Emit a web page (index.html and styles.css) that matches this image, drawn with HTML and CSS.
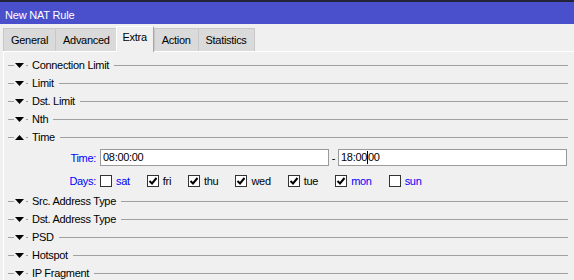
FILE: index.html
```html
<!DOCTYPE html>
<html>
<head>
<title>New NAT Rule</title>
<link rel="stylesheet" href="styles.css">
</head>
<body>

<div class="titlebar">New NAT Rule</div>

<div class="tabs">
	<span class="tab">General</span>
	<span class="tab">Advanced</span>
	<span class="tab selected">Extra</span>
	<span class="tab">Action</span>
	<span class="tab">Statistics</span>
</div>

<div class="panel">

	<div class="section"><i class="seg"></i><svg class="arrow" width="9" height="5"><polygon points="0,0 9,0 4.5,5"/></svg><i class="seg short"></i><span class="name">Connection Limit</span><i class="rule"></i></div>
	<div class="section"><i class="seg"></i><svg class="arrow" width="9" height="5"><polygon points="0,0 9,0 4.5,5"/></svg><i class="seg short"></i><span class="name">Limit</span><i class="rule"></i></div>
	<div class="section"><i class="seg"></i><svg class="arrow" width="9" height="5"><polygon points="0,0 9,0 4.5,5"/></svg><i class="seg short"></i><span class="name">Dst. Limit</span><i class="rule"></i></div>
	<div class="section"><i class="seg"></i><svg class="arrow" width="9" height="5"><polygon points="0,0 9,0 4.5,5"/></svg><i class="seg short"></i><span class="name">Nth</span><i class="rule"></i></div>
	<div class="section"><i class="seg"></i><svg class="arrow" width="9" height="5"><polygon points="0,5 9,5 4.5,0"/></svg><i class="seg short"></i><span class="name">Time</span><i class="rule"></i></div>

	<div class="time-body">
		<div class="field">
			<label>Time:</label>
			<span class="box">08:00:00</span>
			<span class="dash">-</span>
			<span class="box">18:00<i class="caret"></i>00</span>
		</div>
		<div class="field">
			<label>Days:</label>
			<div class="days">
				<span class="day blue"><i class="check"></i>sat</span>
				<span class="day"><i class="check on"><svg width="10" height="10"><path d="M1.5 5 L4 7.5 L8.5 2"/></svg></i>fri</span>
				<span class="day"><i class="check on"><svg width="10" height="10"><path d="M1.5 5 L4 7.5 L8.5 2"/></svg></i>thu</span>
				<span class="day"><i class="check on"><svg width="10" height="10"><path d="M1.5 5 L4 7.5 L8.5 2"/></svg></i>wed</span>
				<span class="day"><i class="check on"><svg width="10" height="10"><path d="M1.5 5 L4 7.5 L8.5 2"/></svg></i>tue</span>
				<span class="day blue"><i class="check on"><svg width="10" height="10"><path d="M1.5 5 L4 7.5 L8.5 2"/></svg></i>mon</span>
				<span class="day blue"><i class="check"></i>sun</span>
			</div>
		</div>
	</div>

	<div class="section"><i class="seg"></i><svg class="arrow" width="9" height="5"><polygon points="0,0 9,0 4.5,5"/></svg><i class="seg short"></i><span class="name">Src. Address Type</span><i class="rule"></i></div>
	<div class="section"><i class="seg"></i><svg class="arrow" width="9" height="5"><polygon points="0,0 9,0 4.5,5"/></svg><i class="seg short"></i><span class="name">Dst. Address Type</span><i class="rule"></i></div>
	<div class="section"><i class="seg"></i><svg class="arrow" width="9" height="5"><polygon points="0,0 9,0 4.5,5"/></svg><i class="seg short"></i><span class="name">PSD</span><i class="rule"></i></div>
	<div class="section"><i class="seg"></i><svg class="arrow" width="9" height="5"><polygon points="0,0 9,0 4.5,5"/></svg><i class="seg short"></i><span class="name">Hotspot</span><i class="rule"></i></div>
	<div class="section"><i class="seg"></i><svg class="arrow" width="9" height="5"><polygon points="0,0 9,0 4.5,5"/></svg><i class="seg short"></i><span class="name">IP Fragment</span><i class="rule"></i></div>

</div>

</body>
</html>
```

FILE: styles.css
```css
body {
	margin: 0;
	background-color: #f0f0f0;
	font-family: 'Liberation Sans', Arial, sans-serif;
	font-size: 11px;
	letter-spacing: -0.3px;
	color: #000;
	overflow: hidden;
}

.titlebar {
	height: 24px;
	border-top: 2px solid #23233a;
	background-color: #4a4fcc;
	color: white;
	padding: 2px 0 0 5px;
	box-sizing: border-box;
	line-height: 22px;
	letter-spacing: -0.2px;
}

.tabs {
	display: flex;
	align-items: flex-end;
	height: 27px;
	padding-left: 3px;
	box-sizing: border-box;
}

.tab {
	height: 23px;
	padding: 0 7px;
	box-sizing: border-box;
	line-height: 23px;
	background-color: #dadada;
	border: 1px solid #c8c8c8;
	border-bottom: none;
	margin-right: -1px;
}

.tab.selected {
	position: relative;
	z-index: 1;
	height: 26px;
	margin-bottom: -1px;
	padding: 0 6px;
	line-height: 20px;
	background-color: #f0f0f0;
	border-color: #fff #a8a8a8 transparent #fff;
	margin-left: -1px;
	margin-right: 0;
}

.panel {
	border-top: 1px solid #fff;
	border-left: 1px solid #fff;
	margin-left: 3px;
	padding: 4px 6px 0 4px;
}

.section {
	display: flex;
	align-items: center;
	height: 18px;
}

.seg, .rule {
	display: block;
	height: 1px;
	background-color: #a0a0a0;
}

.seg {
	width: 6px;
}

.seg.short {
	width: 2px;
}

.arrow {
	display: block;
	margin: 0 2px 0 1px;
}

.arrow polygon {
	fill: #000;
}

.name {
	margin: 0 5px 0 4px;
	white-space: nowrap;
}

.rule {
	flex: 1;
}

.time-body {
	padding: 3px 1px 3px 0;
}

.field {
	display: flex;
	align-items: center;
	height: 17px;
}

.field + .field {
	margin-top: 6px;
}

.field label {
	width: 88px;
	margin-right: 4px;
	text-align: right;
	color: #0000ff;
}

.box {
	flex: 1;
	height: 17px;
	box-sizing: border-box;
	border: 1px solid #9a9a9a;
	background-color: #fff;
	padding-left: 2px;
	line-height: 15px;
	white-space: nowrap;
}

.dash {
	width: 9px;
	text-align: center;
}

.caret {
	display: inline-block;
	width: 1px;
	height: 13px;
	vertical-align: -3px;
	background-color: #000;
}

.days {
	display: flex;
	align-items: center;
	gap: 17px;
}

.day {
	display: flex;
	align-items: center;
}

.day.blue {
	color: #0000ff;
}

.check {
	display: block;
	width: 12px;
	height: 12px;
	box-sizing: border-box;
	border: 1px solid #333;
	background-color: #fff;
	margin-right: 4px;
}

.check svg {
	display: block;
}

.check path {
	fill: none;
	stroke: #000;
	stroke-width: 2;
}
```
